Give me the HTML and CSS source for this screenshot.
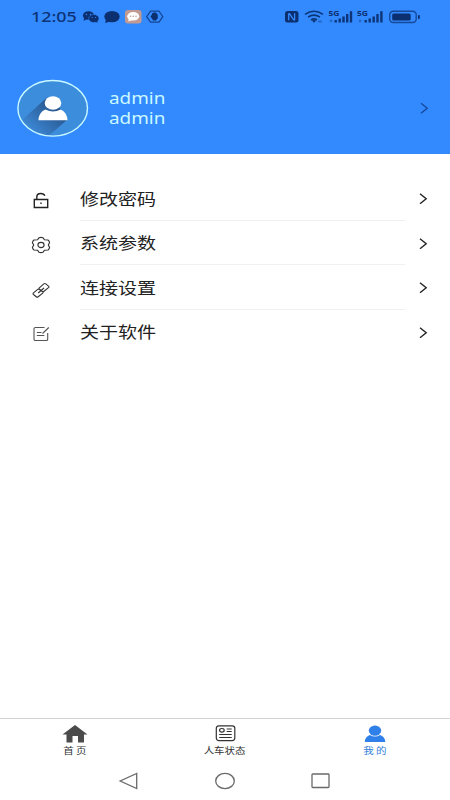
FILE: index.html
```html
<!DOCTYPE html>
<html lang="zh-CN">
<head>
<meta charset="utf-8">
<title>我的</title>
<link rel="stylesheet" href="styles.css">
</head>
<body>
<div class="screen">
  <header class="hero">
    <div class="status">
      <div class="status-left">
        <span class="clock">12:05</span>
        <svg class="status-apps" width="82" height="18" viewBox="0 0 82 18">
          <g fill="#0c2f70">
            <ellipse cx="6.500" cy="7.500" rx="5.600" ry="4.300"/><path d="M2 10l-.4 3 3.400-2z"/>
            <ellipse cx="11.800" cy="10.500" rx="5.200" ry="4" stroke="#338aff" stroke-width=".5"/><path d="M13 13l2.500 2-.3-3z"/>
            <ellipse cx="30" cy="8.600" rx="7.700" ry="5.700"/><path d="M24 11l-.8 4 5-1.500z"/>
          </g>
          <g fill="#338aff"><circle cx="4.500" cy="6.500" r=".7"/><circle cx="8.500" cy="6.500" r=".7"/><circle cx="10.200" cy="9.500" r=".6"/><circle cx="13.500" cy="9.500" r=".6"/></g>
          <rect x="43" y="2" width="16.500" height="13.500" rx="3" fill="#c39a92"/>
          <ellipse cx="51.200" cy="8.200" rx="6" ry="4.300" fill="#fff"/><path d="M46.500 10v3.500l4-1.500z" fill="#fff"/>
          <g fill="#c39a92"><circle cx="48.500" cy="8.200" r=".8"/><circle cx="51.200" cy="8.200" r=".8"/><circle cx="54" cy="8.200" r=".8"/></g>
          <path d="M68.500 3.200h8.500l3.800 5.500-3.800 5.500h-8.500l-3.800-5.500z" fill="none" stroke="#154593" stroke-width="1.200"/>
          <path d="M68.500 8.500l1.200-1.500.5-1.800 1.200-.5 1.400-.4 1.500.7 1.300 1.500.3 3.500-2 2.500h-2.700z" fill="#0c2f70"/>
        </svg>
      </div>
      <svg class="status-right" width="140" height="18" viewBox="0 0 140 18">
        <rect x="1" y="3" width="13.500" height="11.500" rx="2.500" fill="#0c2f70"/>
        <path d="M4.700 12.300V6.200q0-.9.900-.4l4 6q1 .8 1-.4V5.200" fill="none" stroke="#338aff" stroke-width="1.300"/>
        <g fill="none" stroke="#0c3477" stroke-width="1.600">
          <path d="M21 6.300q9-6 18 0M24 9.200q6-4.200 12 0M27 12q3-2.200 6 0"/>
        </g>
        <path d="M27.800 12.500q2.200-1 4.400 0L30 14.800z" fill="#0c2f70"/>
        <path d="M34 13.500h4" stroke="#2368cb" stroke-width="2"/>
        <g class="net"><text x="44.500" y="8" textLength="11" lengthAdjust="spacingAndGlyphs">5G</text><text x="73" y="8" textLength="11" lengthAdjust="spacingAndGlyphs">5G</text></g>
        <g fill="#0c3477">
          <path d="M50.500 12h2.400v2.500h-2.400zM54.500 10.500h2.400v4h-2.400zM58.300 8.500h2.400v6h-2.400zM62 6h2.400v8.500H62zM65.800 3.200h2.400v11.300h-2.400z"/>
          <path d="M80.500 12h2.400v2.500h-2.400zM84.500 10.500h2.400v4h-2.400zM88.500 8.500h2.400v6h-2.400zM92.300 6h2.400v8.500h-2.400zM96.200 3.200h2.400v11.300h-2.400z"/>
        </g>
        <circle cx="47" cy="13" r="1.400" fill="#2368cb"/><circle cx="76" cy="13" r="1.400" fill="#2368cb"/>
        <rect x="105.700" y="3.200" width="26.500" height="11.300" rx="3.500" fill="none" stroke="#164997" stroke-width="1.400"/>
        <rect x="108.200" y="5.400" width="18.500" height="7" rx="1.500" fill="#0c2f70"/>
        <rect x="134" y="7" width="1.800" height="4" rx=".8" fill="#0c2f70"/>
      </svg>
    </div>
    <div class="profile">
      <svg class="avatar" width="72" height="58" viewBox="0 0 72 58">
        <defs>
          <clipPath id="face"><ellipse cx="35.700" cy="29.300" rx="34.500" ry="27.700"/></clipPath>
          <linearGradient id="shade" gradientUnits="userSpaceOnUse" x1="38" y1="28" x2="16" y2="52"><stop offset="0" stop-color="#28578f"/><stop offset="1" stop-color="#3c86d3"/></linearGradient>
        </defs>
        <ellipse cx="35.700" cy="29.300" rx="34.500" ry="27.700" fill="#3c8ddc"/>
        <path clip-path="url(#face)" d="M30 18.500L4 42l24 18 22.500-19.500L42 28z" fill="url(#shade)"/>
        <ellipse cx="35.700" cy="29.300" rx="34.800" ry="27.800" fill="none" stroke="#c9faff" stroke-width="1.400"/>
        <ellipse cx="36" cy="24" rx="8.300" ry="6.800" fill="#fff"/>
        <path d="M21.500 41.200c0-5 3-9.200 7-10.700q7.500 4 15 0c4 1.500 7 5.700 7 10.700z" fill="#fff"/>
      </svg>
      <div class="names"><span>admin</span><span>admin</span></div>
      <svg class="chevron chevron-blue" width="10" height="12" viewBox="0 0 10 12"><path d="M1 1.200l6.200 5-6.200 5"/></svg>
    </div>
  </header>

  <main class="menu">
    <div class="row">
      <svg class="icon" width="20" height="18" viewBox="0 0 20 18"><path class="bold" d="M3.300 7.500h13.400v8H3.300zM5.800 7.500V5q0-3.500 4-3.500 3.200 0 4 2.200M10 10.500v1.500"/></svg>
      <div class="item"><span class="label">修改密码</span></div>
      <svg class="chevron" width="10" height="12" viewBox="0 0 10 12"><path d="M1 1.700l6.200 5-6.200 5"/></svg>
    </div>
    <div class="row">
      <svg class="icon" width="20" height="18" viewBox="0 0 20 18"><path d="M8 1.800q2-.8 4 0l1.500 2 3.500.2q1.300 1 1.600 2.600L17.300 9l1.300 2.400q-.3 1.600-1.600 2.600l-3.500.2-1.500 2q-2 .8-4 0l-1.500-2L3 14q-1.300-1-1.600-2.600L2.700 9 1.400 6.600Q1.700 5 3 4l3.500-.2z"/><ellipse cx="10" cy="9" rx="3.100" ry="2.600"/></svg>
      <div class="item"><span class="label">系统参数</span></div>
      <svg class="chevron" width="10" height="12" viewBox="0 0 10 12"><path d="M1 1.700l6.200 5-6.200 5"/></svg>
    </div>
    <div class="row">
      <svg class="icon" width="20" height="18" viewBox="0 0 20 18"><path d="M8.300 6.800l4.500-3.900q1-.8 2 0l2.700 2.200q.9.800 0 1.600L13 10.300q-1 .8-2 0L8.300 8.300q-.8-.8 0-1.500zM7 8.200l-4.500 3.700q-.9.800 0 1.600l2.700 2.200q1 .8 2 0l4.500-3.600q.8-.8 0-1.500L9 8.500q-1-.9-2-.3zM7.200 12l5.800-5"/></svg>
      <div class="item"><span class="label">连接设置</span></div>
      <svg class="chevron" width="10" height="12" viewBox="0 0 10 12"><path d="M1 1.700l6.200 5-6.200 5"/></svg>
    </div>
    <div class="row">
      <svg class="icon" width="20" height="18" viewBox="0 0 20 18"><path class="soft" d="M13.500 2.500h-9q-1.500 0-1.500 1.300v10.400q0 1.300 1.500 1.300h10.700q1.500 0 1.500-1.300V8M5.800 7.500h4.700M5.800 10.500h7.500M11.500 8.500l6.300-6"/></svg>
      <div class="item last"><span class="label">关于软件</span></div>
      <svg class="chevron" width="10" height="12" viewBox="0 0 10 12"><path d="M1 1.700l6.200 5-6.200 5"/></svg>
    </div>
  </main>

  <nav class="tabs">
    <div class="tab">
      <svg width="26" height="20" viewBox="0 0 26 20"><path d="M13 1l12.500 9.500H22V18.500h-6v-6.500h-5.500v6.500h-6v-8H.5z" fill="#4b4b4b"/></svg>
      <span>首 页</span>
    </div>
    <div class="tab">
      <svg width="26" height="20" viewBox="0 0 26 20"><g fill="none" stroke="#333" stroke-width="1.200"><rect x="4.300" y="1.800" width="18.500" height="14.800" rx="2.500"/><ellipse cx="9.900" cy="6.300" rx="2.300" ry="1.800"/><path d="M14.700 5h5M14.700 7.500h5M7.200 10.500h12.500M7.200 13.500h12.500"/></g></svg>
      <span>人车状态</span>
    </div>
    <div class="tab active">
      <svg width="26" height="20" viewBox="0 0 26 20"><ellipse cx="13" cy="6.600" rx="6.200" ry="5.200" fill="#2f80e8"/><path d="M2.800 18c0-3.500 2.200-6 5.200-7q5 3 10 0c3 1 5.300 3.500 5.300 7z" fill="#2f80e8"/></svg>
      <span>我 的</span>
    </div>
  </nav>

  <div class="system-nav">
    <svg width="20" height="18" viewBox="0 0 20 18"><path d="M18.700 1.500v15L2.200 9z"/></svg>
    <svg width="20" height="18" viewBox="0 0 20 18"><ellipse cx="10" cy="9" rx="9.300" ry="7.600"/></svg>
    <svg width="20" height="18" viewBox="0 0 20 18"><rect x="1" y="2" width="17" height="13.500" rx=".8"/></svg>
  </div>
</div>
</body>
</html>
```
FILE: styles.css
```css
* { box-sizing: border-box; }
body {
  margin: 0;
  background: #fff;
  font-family: "Noto Sans", "Noto Sans CJK SC", sans-serif;
}
svg { display: block; flex: none; }
.screen {
  width: 450px;
  height: 800px;
  display: flex;
  flex-direction: column;
  overflow: hidden;
}
.hero { height: 154px; background: #338aff; }
.status {
  height: 34px;
  padding: 0 30px 0 31px;
  display: flex;
  align-items: center;
  justify-content: space-between;
}
.status-left { display: flex; align-items: center; }
.clock {
  width: 51px;
  font: 500 14px/18px "Noto Sans", sans-serif;
  color: #0c3477;
  transform: scaleX(1.28);
  transform-origin: left;
}
.status-right { margin-right: -4px; }
.net text { font: bold 7.5px "Noto Sans", sans-serif; fill: #0c2f70; }
.profile {
  height: 58px;
  margin-top: 45px;
  padding: 0 20px 0 17px;
  display: flex;
  align-items: center;
}
.names {
  flex: 1;
  padding-left: 19.5px;
  display: flex;
  flex-direction: column;
  font-size: 16px;
  line-height: 20px;
  color: #cbf9ff;
}
.names span { transform: scaleX(1.18); transform-origin: left; }
.chevron path { fill: none; stroke: #222; stroke-width: 1.4; }
.chevron-blue path { stroke: #14499c; }
.menu { flex: 1; padding: 22px 20px 0 31px; }
.row { height: 44.5px; display: flex; align-items: center; }
.icon { position: relative; top: 2.5px; }
.icon path, .icon ellipse { fill: none; stroke: #333; stroke-width: 1.1; }
.icon .bold { stroke: #222; stroke-width: 1.4; }
.icon .soft { stroke: #555; }
.item {
  width: 325px;
  height: 100%;
  margin: 0 14px 0 29px;
  border-bottom: 1px solid #f0f0f0;
  display: flex;
  align-items: center;
}
.item.last { border-bottom-color: transparent; }
.label {
  font-family: "Noto Sans CJK SC", sans-serif;
  font-size: 16px;
  line-height: 24px;
  color: #222;
  transform: scaleX(1.19);
  transform-origin: left;
}
.tabs {
  height: 43px;
  border-top: 1px solid #d2d2d2;
  padding-top: 5px;
  display: flex;
}
.tab {
  flex: 1;
  display: flex;
  flex-direction: column;
  align-items: center;
  font: 8.8px/14px "Noto Sans CJK SC", sans-serif;
  color: #333;
}
.tab span { transform: scaleX(1.19); }
.tab.active { color: #2f80d8; }
.system-nav {
  height: 39px;
  padding: 0 119px 0 118px;
  display: flex;
  align-items: center;
  justify-content: space-between;
}
.system-nav svg * { fill: none; stroke: #6a6a6a; stroke-width: 1.3; }
```
